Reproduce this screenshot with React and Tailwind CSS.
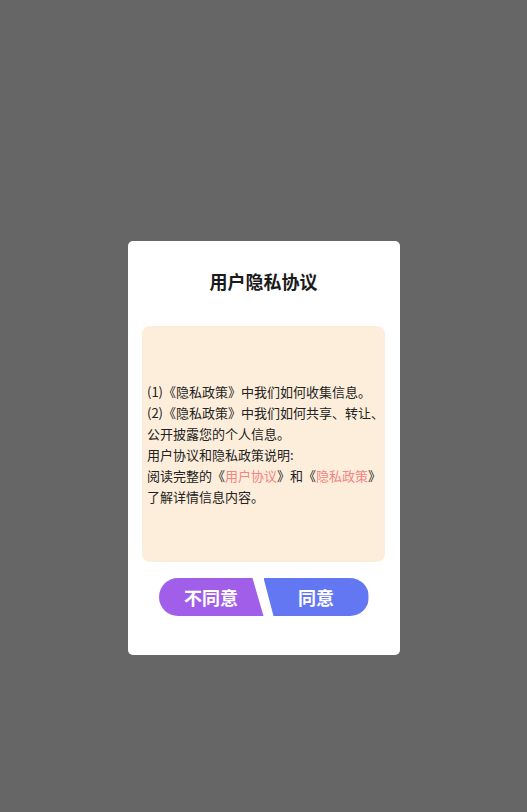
import React from 'react';

const lines = [
  ['(1)《隐私政策》中我们如何收集信息。'],
  ['(2)《隐私政策》中我们如何共享、转让、'],
  ['公开披露您的个人信息。'],
  ['用户协议和隐私政策说明:'],
];

const PrivacyDialog = () => {
  return (
    <div
      className="min-h-screen w-full bg-[#666666] flex items-center justify-center"
      style={{ fontFamily: '"Noto Sans CJK SC", "Noto Sans", sans-serif' }}
    >
      <div className="w-[272px] mt-[84px] bg-white rounded-[5px] flex flex-col items-center pt-[28px] pb-[39px]">
        <h2 className="text-[18px] leading-[24px] font-bold text-[#1a1a1a]">用户隐私协议</h2>

        <div className="mt-[33px] w-[243px] h-[236px] bg-[#fdeedb] rounded-[8px] px-[5px] flex flex-col justify-center text-[13px] leading-[21px] text-[#222222]">
          {lines.map((l, i) => (
            <div key={i} className="whitespace-nowrap">{l[0]}</div>
          ))}
          <div className="whitespace-nowrap">
            阅读完整的《<span className="text-[#f38484]">用户协议</span>》和《
            <span className="text-[#f38484]">隐私政策</span>》
          </div>
          <div className="whitespace-nowrap">了解详情信息内容。</div>
        </div>

        <div className="mt-[16px] flex">
          <button
            className="w-[105px] h-[38px] rounded-l-full bg-[#a15fe9] text-white text-[18px] font-bold flex items-center justify-center"
            style={{ clipPath: 'polygon(0 0, calc(100% - 11px) 0, 100% 100%, 0 100%)' }}
          >
            不同意
          </button>
          <button
            className="w-[105px] h-[38px] rounded-r-full bg-[#6477f3] text-white text-[18px] font-bold flex items-center justify-center"
            style={{ clipPath: 'polygon(0 0, 100% 0, 100% 100%, 10px 100%)' }}
          >
            同意
          </button>
        </div>
      </div>
    </div>
  );
};

export default PrivacyDialog;
